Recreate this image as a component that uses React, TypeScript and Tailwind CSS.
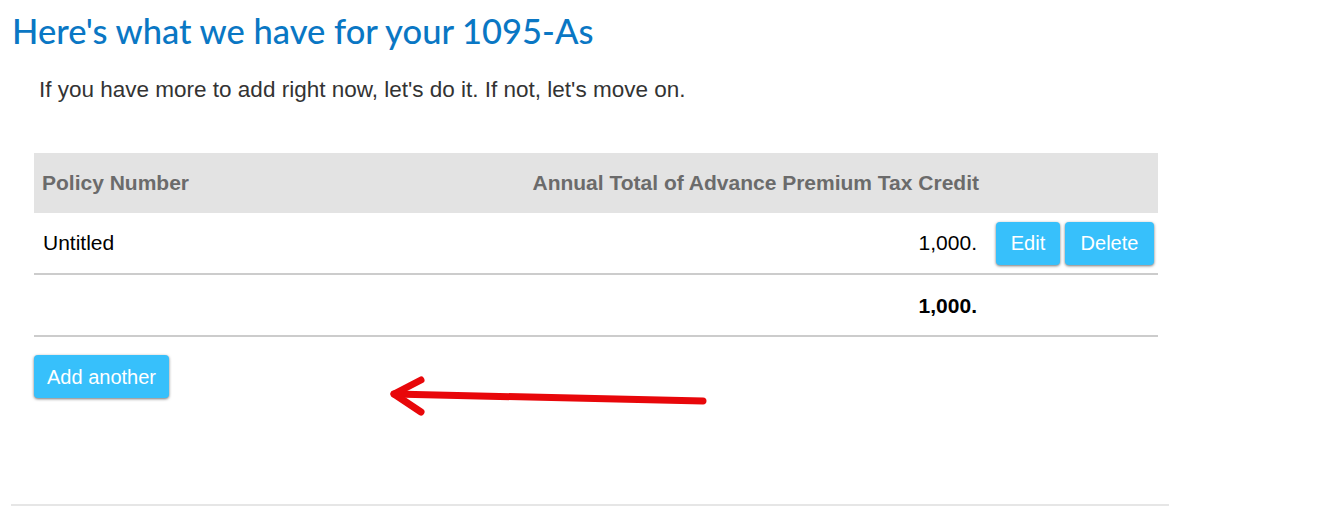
export default function App() {
  const btn =
    'rounded-[4px] bg-[#37c0fb] text-white text-[20px] leading-none shadow-[0_1px_3px_rgba(0,0,0,0.55)] flex items-center justify-center';

  return (
    <div className="relative h-[506px] w-[1318px] bg-white font-['Liberation_Sans',Arial,sans-serif]">
      <div className="ml-[11px] flex h-[506px] w-[1158px] flex-col border-b-2 border-[#e6e6e6]">
        {/* Title */}
        <h1 className="mt-[10px] pl-[1px] font-['Lato',sans-serif] text-[34.5px] leading-[42px] font-medium text-[#0a77c4]">
          Here's what we have for your 1095-As
        </h1>

        <p className="mt-[25px] pl-[28px] text-[22.5px] leading-[26px] text-[#333333]">
          If you have more to add right now, let's do it. If not, let's move on.
        </p>

        {/* Table */}
        <div className="mt-[50px] ml-[23px] w-[1124px]">
          <div className="flex h-[60px] items-center bg-[#e3e3e3] text-[21px] font-bold text-[#6b6b6b]">
            <div className="flex-1 pl-[8px]">Policy Number</div>
            <div className="whitespace-nowrap text-right">Annual Total of Advance Premium Tax Credit</div>
            <div className="w-[179px]" />
          </div>

          <div className="flex h-[62px] items-center border-b-2 border-[#cccccc] text-[21px] text-black">
            <div className="flex-1 pl-[9px]">Untitled</div>
            <div className="pr-[19px] text-right">1,000.</div>
            <div className="flex w-[162px] gap-[5px]">
              <button type="button" className={btn + ' h-[43px] w-[64px]'}>
                Edit
              </button>
              <button type="button" className={btn + ' h-[43px] w-[89px]'}>
                Delete
              </button>
            </div>
          </div>

          <div className="flex h-[62px] items-center border-b-2 border-[#cccccc] pt-[1px] text-[21px] font-bold text-black">
            <div className="flex-1" />
            <div className="pr-[181px] text-right">1,000.</div>
          </div>

          <button type="button" className={btn + ' mt-[18px] h-[43px] w-[135px]'}>
            Add another
          </button>
        </div>
      </div>

      {/* Annotation arrow */}
      <svg
        className="absolute left-0 top-0"
        width="1318"
        height="506"
        viewBox="0 0 1318 506"
        fill="none"
      >
        <g stroke="#e8070a" strokeWidth="7" strokeLinecap="round" strokeLinejoin="round">
          <path d="M703 401 L394 394" />
          <path d="M421 380 L394 394 L421 412" />
        </g>
      </svg>
    </div>
  );
}
